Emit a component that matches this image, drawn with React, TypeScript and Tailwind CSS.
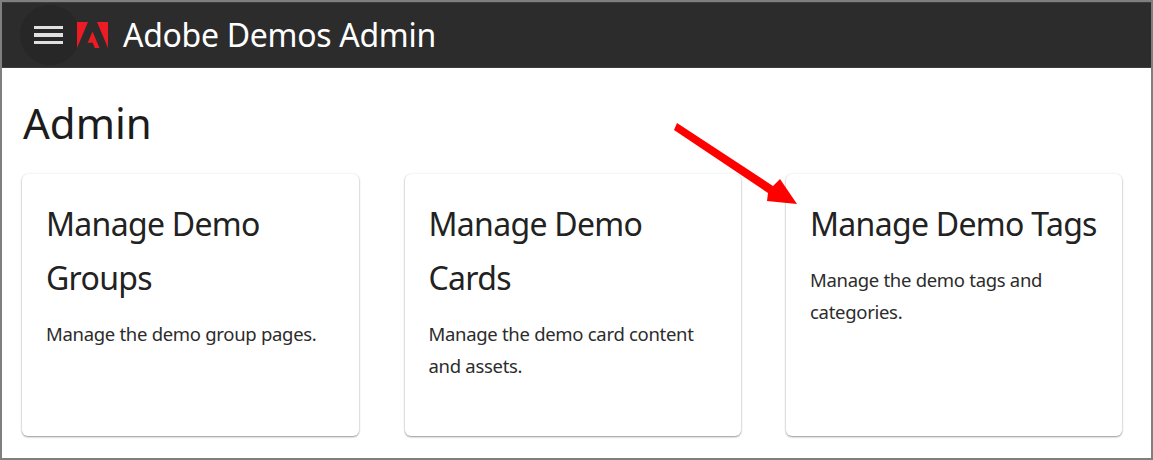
const font = "[font-family:'Noto_Sans','Open_Sans',sans-serif]";

const cards = [
  { title: 'Manage Demo Groups', text: 'Manage the demo group pages.' },
  { title: 'Manage Demo Cards', text: 'Manage the demo card content and assets.' },
  { title: 'Manage Demo Tags', text: 'Manage the demo tags and categories.' },
];

function AdobeLogo() {
  return (
    <svg width="31" height="26" viewBox="0 0 31 26" className="shrink-0">
      <path d="M0 0h11L0 26z" fill="#ed1c24" />
      <path d="M20 0h11v26z" fill="#ed1c24" />
      <path d="M15.500 9.500 22.500 26h-4.700l-2-5.200h-5.100z" fill="#ed1c24" />
    </svg>
  );
}

export default function App() {
  return (
    <div className={`relative h-[460px] w-[1153px] overflow-hidden border-2 border-[#7f7f7f] bg-white ${font}`}>
      <header className="flex h-[66px] items-center border-y border-y-[#3c3c3c] bg-[#2c2c2c] pl-[18px]">
        <div className="flex h-[60px] w-[60px] items-center justify-center rounded-full bg-[#272727]">
          <div className="-ml-[3px] flex w-[29px] flex-col gap-[4px]">
            <span className="h-[3.500px] bg-[#e0e0e0]" />
            <span className="h-[3.500px] bg-[#e0e0e0]" />
            <span className="h-[3.500px] bg-[#e0e0e0]" />
          </div>
        </div>
        <div className="-ml-[3px] flex items-center gap-[15px]">
          <AdobeLogo />
          <span className="text-[32px] leading-[40px] tracking-[-0.3px] text-white">Adobe Demos Admin</span>
        </div>
      </header>

      <main className="px-5">
        <h1 className="mt-[26px] pl-px text-[42px] leading-[58px] text-[#1c1c1c]">Admin</h1>
        <div className="mt-[22px] grid grid-cols-[337px_336px_336px] gap-x-[45.500px]">
          {cards.map((card) => (
            <section
              key={card.title}
              className="h-[262px] rounded-[6px] bg-white px-[24px] pt-[23px] shadow-[0_1px_2px_rgba(0,0,0,0.4),0_0_3px_rgba(0,0,0,0.06)]"
            >
              <h2 className="text-[32px] leading-[54px] tracking-[-0.7px] text-[#222]">{card.title}</h2>
              <p className="mt-[13px] text-[18.500px] leading-[32px] tracking-[-0.3px] text-[#2c2c2c]">{card.text}</p>
            </section>
          ))}
        </div>
      </main>

      <svg width="140" height="100" viewBox="0 0 140 100" className="absolute left-[670px] top-[116px]">
        <path d="M5 5 2 12 96 75 95 83 125 86 108 61 101 68z" fill="#fe0000" />
      </svg>
    </div>
  );
}
